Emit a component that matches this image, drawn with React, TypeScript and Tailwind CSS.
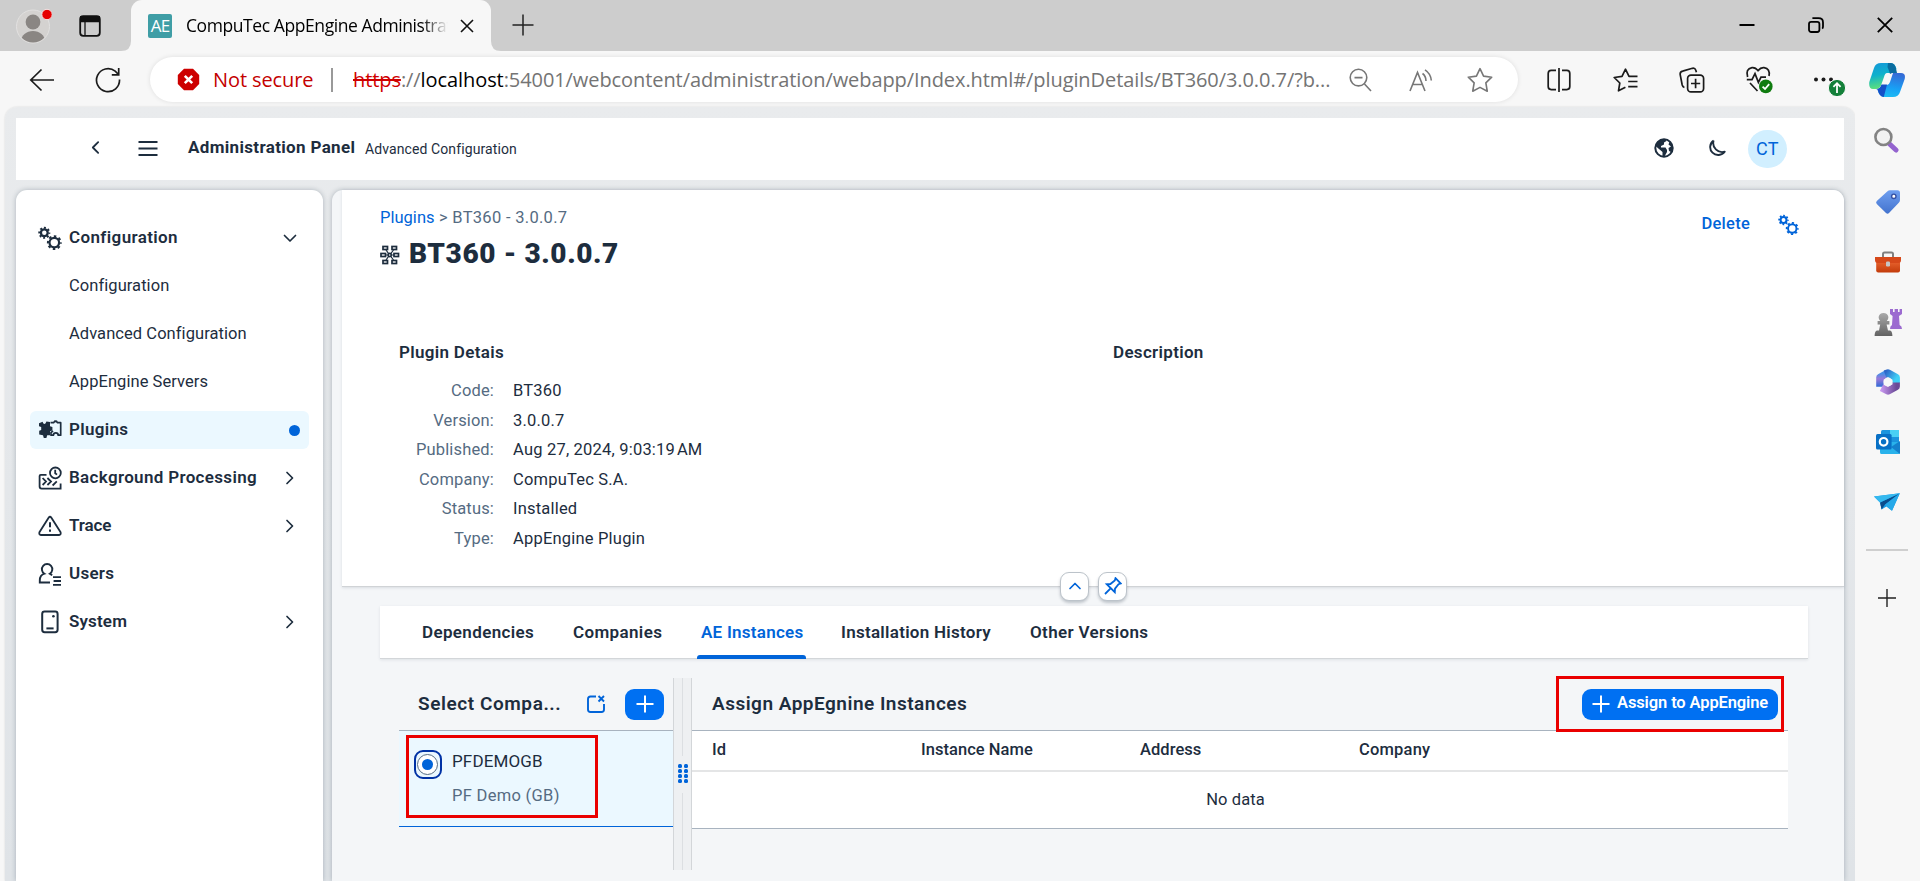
import React from "react";

const INK = "#1d2d3e";
const BLUE = "#0064d9";

type IconProps = { color?: string; className?: string };

function Gears({ color = INK, className = "" }: IconProps) {
  return (
    <svg className={className} viewBox="0 0 24 24" fill="none" stroke={color}>
      <circle cx="6.3" cy="6.8" r="3.4" strokeWidth="2.3" />
      <circle cx="6.3" cy="6.8" r="5" strokeWidth="2" strokeDasharray="1.963 1.963" strokeDashoffset="1" />
      <circle cx="16.3" cy="16.6" r="4.8" strokeWidth="2.2" />
      <circle cx="16.3" cy="16.6" r="6.4" strokeWidth="2" strokeDasharray="2.513 2.513" strokeDashoffset="1.25" />
    </svg>
  );
}

function PluginIcon() {
  return (
    <svg className="h-6 w-6" viewBox="0 0 24 24">
      <path d="M1 5.2 4.6 3.8 5.2 5.2Q6.4 6.6 7.6 5.2L8.4 3.6 12 4V8.2L14.4 9V12.6L12 13.2V17.2H9.2L8.4 20H5.8L5 17.2 1.2 16.4V12.8L3.2 12V9L1 8.2Z" fill={INK} />
      <path d="M12.500 4.700H15.600A2.100 2.100 0 0 1 19.500 4.700H22.700V17.200H20.200A2.400 2.400 0 0 0 15.400 17.200H13V14.600L15 12.800" fill="none" stroke={INK} strokeWidth="1.7" strokeLinejoin="round" />
      <path d="M16 4.500A1.800 1.800 0 0 1 19.200 4.500V2.600H16Z" fill={INK} />
    </svg>
  );
}

function ProcessIcon() {
  return (
    <svg className="h-6 w-6" viewBox="0 0 24 24" fill="none" stroke={INK} strokeWidth="1.8">
      <path d="M8.5 8.8H2.8Q1.6 8.8 1.6 10V20.6Q1.6 22.6 3.6 22.6H22.6V17.6M4.6 12 8 15.6 4.6 19M9.4 12 13 15.6 9.4 19M14.6 19.5 18.8 15.4" />
      <circle cx="17.4" cy="6.9" r="5.4" />
      <path d="M17.2 3.8V7.2L19 8.6" />
    </svg>
  );
}

function WarningIcon() {
  return (
    <svg className="h-6 w-6" viewBox="0 0 24 24" fill="none" stroke={INK} strokeWidth="1.8" strokeLinejoin="round">
      <path d="M10.6 3.7Q12 1.8 13.4 3.7L22.6 18.2Q23.2 20.8 21 21H3Q.8 20.8 1.4 18.2Z" />
      <path d="M12 8.2V13.2M12 15.6V17.8" strokeWidth="2" />
    </svg>
  );
}

function UsersIcon() {
  return (
    <svg className="h-6 w-6" viewBox="0 0 24 24" fill="none" stroke={INK} strokeWidth="1.9">
      <path d="M12 20.500H1.800V18.300Q1.800 13.300 6.400 11.700A5.200 5.200 0 1 1 11.800 11.700L14.200 13.300" />
      <path d="M15 15.2H23M15.6 19H23M15 22.8H23" strokeWidth="1.8" />
    </svg>
  );
}

function SystemIcon() {
  return (
    <svg className="h-6 w-6" viewBox="0 0 24 24" fill="none" stroke={INK} strokeWidth="2">
      <rect x="4.2" y="1.6" width="15.4" height="20.6" rx="2.4" />
      <path d="M8.4 18.4H15.6" />
      <circle cx="15.4" cy="6.2" r="1.3" fill={INK} stroke="none" />
    </svg>
  );
}

function Chevron({ d, color = INK, className = "h-4 w-4" }: { d: string } & IconProps) {
  return (
    <svg className={className} viewBox="0 0 16 16" fill="none" stroke={color} strokeWidth="1.7" strokeLinecap="round" strokeLinejoin="round">
      <path d={d} />
    </svg>
  );
}

function TitleBar() {
  return (
    <div className="flex h-[51px] items-stretch bg-[#cdcdcd]">
      <div className="flex w-[131px] items-center">
        <svg className="ml-4 h-[42px] w-9" viewBox="0 0 36 42">
          <defs>
            <clipPath id="head">
              <circle cx="17" cy="21.5" r="16" />
            </clipPath>
          </defs>
          <circle cx="17" cy="21.5" r="16.5" fill="#d4d2d0" stroke="#e2e1e0" />
          <circle cx="17" cy="17" r="7.4" fill="#8a8683" />
          <ellipse cx="17" cy="36.5" rx="12" ry="10.5" fill="#8a8683" clipPath="url(#head)" />
          <circle cx="31" cy="9.5" r="5.2" fill="#e60000" stroke="#f3e5e5" />
        </svg>
        <svg className="ml-[27px] h-[22px] w-[22px]" viewBox="0 0 22 22" fill="none" stroke="#111" strokeWidth="1.8">
          <rect x="1.2" y="1.2" width="19.6" height="19.6" rx="3" />
          <path d="M2 2H20V6.4H2Z" fill="#111" />
          <path d="M6 6V20.5" strokeWidth="1.3" />
        </svg>
      </div>
      <div className="relative flex w-[360px] items-center rounded-t-[11px] bg-[#f7f7f7]">
        <svg className="absolute bottom-0 -left-[10px] h-[10px] w-[10px]" viewBox="0 0 10 10"><path d="M10 0V10H0Q10 10 10 0" fill="#f7f7f7" /></svg>
        <svg className="absolute -right-[10px] bottom-0 h-[10px] w-[10px]" viewBox="0 0 10 10"><path d="M0 0V10H10Q0 10 0 0" fill="#f7f7f7" /></svg>
        <div className="ml-[17px] flex h-6 w-6 items-center justify-center rounded-[2px] bg-[#3f9ea6] font-['Open_Sans',sans-serif] text-[17px] font-medium tracking-[-0.9px] text-white">AE</div>
        <div className="mb-[2px] ml-[14px] w-[262px] overflow-hidden bg-gradient-to-r from-black from-90% to-transparent bg-clip-text font-['Open_Sans',sans-serif] text-[17.5px] leading-7 tracking-[-0.42px] whitespace-nowrap text-transparent">
          CompuTec AppEngine Administration
        </div>
        <svg className="ml-3 h-[14px] w-[14px]" viewBox="0 0 14 14" fill="none" stroke="#111" strokeWidth="1.6"><path d="M1 1 13 13M13 1 1 13" /></svg>
      </div>
      <div className="flex flex-1 items-center pb-[2px] pl-[21px]">
        <svg className="h-[22px] w-[22px]" viewBox="0 0 22 22" fill="none" stroke="#222" strokeWidth="1.5"><path d="M11 .5V21.5M.5 11H21.5" /></svg>
        <div className="ml-auto flex items-center gap-[53px] pr-[27px]">
          <svg className="h-4 w-4" viewBox="0 0 16 16"><path d="M.5 8H15.5" stroke="#000" strokeWidth="2" /></svg>
          <svg className="h-4 w-4" viewBox="0 0 16 16" fill="none" stroke="#000" strokeWidth="1.8"><rect x="1" y="4.8" width="10.4" height="10.2" rx="2.2" /><path d="M4.4 1.200H10.500Q15 1.200 15 5.400V9.400Q15 11 14.200 11.600" /></svg>
          <svg className="h-4 w-4" viewBox="0 0 16 16"><path d="M.8.8 15.2 15.2M15.2.8.8 15.2" stroke="#000" strokeWidth="1.8" /></svg>
        </div>
      </div>
    </div>
  );
}

function AddressBar() {
  return (
    <div className="flex h-14 items-start bg-[#f7f7f7] pt-[6px]">
      <div className="flex h-[45px] w-[150px] shrink-0 items-center">
        <svg className="ml-[29px] h-6 w-[26px]" viewBox="0 0 26 24" fill="none" stroke="#1b1b1b" strokeWidth="1.7"><path d="M25 12H2M12.5 1.5 1.8 12 12.5 22.5" /></svg>
        <svg className="ml-10 h-[26px] w-[26px]" viewBox="0 0 26 26" fill="none" stroke="#1b1b1b" strokeWidth="1.7"><path d="M24.5 12.5A11.5 11.5 0 1 1 20.2 4.2L23.5 7.5M23.7 1V7.8H16.8" /></svg>
      </div>
      <div className="flex h-[45px] w-[1368px] shrink-0 items-center rounded-full bg-white font-['Open_Sans',sans-serif] text-[20px] shadow-[0_0_5px_rgba(0,0,0,0.1)]">
        <svg className="ml-[27px] h-[23px] w-[23px] shrink-0" viewBox="0 0 23 23"><path d="M7 .8H16L22.2 7V16L16 22.2H7L.8 16V7Z" fill="#cd0000" /><path d="M7.8 7.8 15.2 15.2M15.2 7.8 7.8 15.2" stroke="#fff" strokeWidth="2.6" /></svg>
        <span className="ml-[13px] w-[104px] tracking-[-0.1px] whitespace-nowrap text-[#c40000]">Not secure</span>
        <span className="ml-[14px] h-6 w-[2px] bg-[#999]" />
        <span className="ml-5 w-[980px] text-[20px] tracking-[-0.08px] whitespace-nowrap text-[#747474]">
          <span className="text-[#d00000] line-through">https</span>://<span className="text-black">localhost</span>:54001/webcontent/administration/webapp/Index.html#/pluginDetails/BT360/3.0.0.7/?b...
        </span>
        <svg className="ml-[16px] h-6 w-6 shrink-0" viewBox="0 0 24 24" fill="none" stroke="#777" strokeWidth="1.6"><circle cx="9.500" cy="9.600" r="8.300" /><path d="M5.500 9.600H13.500M15.500 16 22 23" /></svg>
        <svg className="ml-9 h-6 w-6 shrink-0" viewBox="0 0 24 24" fill="none" stroke="#777" strokeWidth="1.6"><path d="M1 23 8.5 4.5 16 23M3.8 16.5H13.2M13.5 5.5Q17 8.2 17 13M16 1.8Q21.8 5.6 22.3 12.5" /></svg>
        <svg className="ml-[34px] h-[26px] w-[26px] shrink-0" viewBox="0 0 24 24" fill="none" stroke="#777" strokeWidth="1.5" strokeLinejoin="round"><path d="M12 1.5 15.3 8.4 22.8 9.4 17.4 14.7 18.7 22.3 12 18.8 5.3 22.3 6.6 14.7 1.2 9.4 8.7 8.4Z" /></svg>
      </div>
      <div className="flex h-[45px] flex-1 items-center pl-[29px]">
        <svg className="h-6 w-6" viewBox="0 0 24 24" fill="none" stroke="#1b1b1b" strokeWidth="1.700"><path d="M9 2.4H4.2Q1.2 2.4 1.2 5.4V18.6Q1.2 21.6 4.2 21.6H9M15 2.4H19.8Q22.8 2.4 22.8 5.4V18.6Q22.8 21.6 19.8 21.6H15M12 0V24" /></svg>
        <svg className="ml-[42px] h-6 w-[26px]" viewBox="0 0 26 24" fill="none" stroke="#1b1b1b" strokeWidth="1.700" strokeLinejoin="round"><path d="M12.4 19.2 5.5 22.8 6.8 15 1.2 9.5 9 8.3 12.5 1.2 16 8.3H24.5M15.2 13.5H24.5M15.2 18.7H24.5" /></svg>
        <svg className="ml-10 h-[26px] w-[26px]" viewBox="0 0 26 26" fill="none" stroke="#1b1b1b" strokeWidth="1.700"><path d="M5.4 20.5Q3.8 20 3.2 18L1.2 7.6Q.8 4.8 3.6 4.1L13.4 1.3Q16 .8 16.8 3.2L17.4 5.2" /><rect x="8.6" y="8.2" width="16" height="16.6" rx="3.4" /><path d="M16.6 11.8V21.2M12 16.5H21.2" /></svg>
        <svg className="ml-10 h-8 w-[30px]" viewBox="0 0 30 32" fill="none" stroke="#1b1b1b" strokeWidth="1.700"><path d="M2.6 13Q.2 4.8 7 3.6 10.4 3.2 13 6.6 15.8 3.2 19 3.6 25.4 4.8 24 12M1.8 15.6H7L10 9.6 13.4 18.4 16 13.2H21M5 19 12.5 27" /><circle cx="20.8" cy="22.4" r="6.8" fill="#107c10" stroke="none" /><path d="M17.6 22.6 20 25 24.2 20.2" stroke="#fff" strokeWidth="1.8" /></svg>
        <svg className="ml-[39px] h-8 w-8" viewBox="0 0 32 32"><g fill="#1b1b1b"><circle cx="2" cy="15.5" r="2" /><circle cx="9.5" cy="15.5" r="2" /><circle cx="17" cy="15.5" r="2" /></g><circle cx="23" cy="24" r="8.6" fill="#14803a" stroke="#f7f7f7" /><path d="M23 29V19.5M19.4 22.8 23 19.2 26.6 22.8" fill="none" stroke="#fff" strokeWidth="1.8" /></svg>
        <svg className="ml-[23px] h-9 w-9 shrink-0" viewBox="0 0 36 36">
          <defs>
            <linearGradient id="cp1" x1="0" y1="0" x2=".2" y2="1"><stop offset="0" stopColor="#1597d9" /><stop offset=".5" stopColor="#0fb1cc" /><stop offset="1" stopColor="#5be07c" /></linearGradient>
            <linearGradient id="cp2" x1=".5" y1="0" x2=".3" y2="1"><stop offset="0" stopColor="#356bd6" /><stop offset=".6" stopColor="#18a0f5" /><stop offset="1" stopColor="#1dbdf3" /></linearGradient>
          </defs>
          <path d="M5 6Q6.500 1 12 1H22Q26 1 27.500 7L24 11H18Q16 11 15 15L12.500 22Q11 27 7 27H4Q-.5 27 .3 20Z" fill="url(#cp1)" />
          <path d="M31 30Q29.500 35 24 35H15Q10.500 35 8.500 27.500 12 27 13 23H18Q20 23 21 20L24 11H32Q37 11 35.700 17Z" fill="url(#cp2)" />
          <path d="M19 1H22Q26 1 27.200 7.500L28 11H23L21 12Q20 8.500 18.500 5Z" fill="#0a6c9f" />
          <path d="M7 27Q11 27 12.500 22.500H18L14.800 35Q10.500 35 8.500 27.500Z" fill="#1450c8" />
        </svg>
      </div>
    </div>
  );
}

function EdgeRail() {
  return (
    <div className="flex w-[65px] shrink-0 flex-col items-center bg-[#f7f7f7] pr-[2px]">
      <svg className="mt-5 mr-px h-[26px] w-[26px]" viewBox="0 0 26 26"><path d="M15.5 16 23 23" stroke="#9464cf" strokeWidth="5" strokeLinecap="round" /><circle cx="10.4" cy="10" r="8" fill="#f2f2f2" stroke="#838383" strokeWidth="2.6" /></svg>
      <svg className="mt-9 ml-[2px] h-[26px] w-[26px]" viewBox="0 0 26 26"><defs><linearGradient id="tag" x2="0" y2="1"><stop stopColor="#6f9ff0" /><stop offset="1" stopColor="#4373ce" /></linearGradient></defs><path d="M15 1.2H22.5Q25 1.2 25 3.8V11Q25 12.6 23.8 13.8L14 24Q12.6 25.5 11 24L1.8 15Q.4 13.6 1.8 12L12.5 2.2Q13.5 1.2 15 1.2Z" fill="url(#tag)" /><circle cx="18.8" cy="7.3" r="2.2" fill="#fff" stroke="#3550a3" strokeWidth="1.4" /></svg>
      <svg className="mt-9 ml-[2px] h-[22px] w-7" viewBox="0 0 28 22"><defs><linearGradient id="box" x2="0" y2="1"><stop stopColor="#f06a35" /><stop offset="1" stopColor="#c33c0b" /></linearGradient></defs><path d="M9 6V3Q9 1.5 10.5 1.5H17.5Q19 1.5 19 3V6" fill="none" stroke="#808080" strokeWidth="2" /><rect x="2.2" y="8" width="23.8" height="13.4" rx="2" fill="url(#box)" /><path d="M1 6H27V9Q27 12 24.5 12H3.5Q1 12 1 9Z" fill="#d6491a" /><rect x="12" y="10.4" width="4" height="5" rx="1.2" fill="#c6c6c6" /></svg>
      <svg className="mt-[36px] ml-[2px] h-7 w-7" viewBox="0 0 28 28"><defs><linearGradient id="pawn" x2="0" y2="1"><stop stopColor="#aaa" /><stop offset="1" stopColor="#626262" /></linearGradient></defs><path d="M16 0H19V3H20.6V0H24V3H25.6V0H28V5L25 7 25.6 16Q28 17 28 20H16Q16 17 18 16L18.6 7 16 5Z" fill="#9c6bd0" /><path d="M4.6 8A5 5 0 0 1 14.4 8Q14.4 10.5 12.8 12H15.4V15.6H12.6L14 21.4H16Q18.4 22 18.4 27H.6Q.6 22 3 21.4H5L6.2 15.6H3.6V12H6.2Q4.6 10.5 4.6 8" fill="url(#pawn)" /></svg>
      <svg className="mt-8 ml-[2px] h-[26px] w-6" viewBox="0 0 24 26" fill="none" strokeWidth="7.400" strokeLinejoin="round">
        <defs>
          <linearGradient id="ml" x2="0" y2="1"><stop stopColor="#4a8fe6" /><stop offset=".4" stopColor="#9a78d8" /><stop offset="1" stopColor="#2f6bd6" /></linearGradient>
          <linearGradient id="mr" x2="1" y2=".6"><stop stopColor="#2f66c9" /><stop offset="1" stopColor="#3fd0f6" /></linearGradient>
          <linearGradient id="mb" x2="1" y2="0"><stop stopColor="#c695ee" /><stop offset="1" stopColor="#6a4a96" /></linearGradient>
        </defs>
        <path d="M11 4.500 3.900 8.500V17.800" stroke="url(#ml)" />
        <path d="M20.200 13V17.600L12 22 5.500 18.800" stroke="url(#mb)" />
        <path d="M9 5 12 3.900 20.200 8.500V13.500" stroke="url(#mr)" />
        <circle cx="12" cy="13" r="4.400" fill="#f7f7f7" />
      </svg>
      <svg className="mt-[35px] ml-[2px] h-6 w-6" viewBox="0 0 24 24"><rect x="5" width="18" height="22" rx="1.5" fill="#1b94de" /><path d="M14 0H23V7H14Z" fill="#49d0f4" /><path d="M4 12H24V22.5Q24 24 22.5 24H5Q4 24 4 22Z" fill="#29b2eb" /><path d="M15 17 24 11V24Z" fill="#1480cc" /><rect y="4" width="15.6" height="15.6" rx="1.5" fill="#0870c5" /><circle cx="7.6" cy="11.8" r="3.8" fill="none" stroke="#fff" strokeWidth="2.2" /></svg>
      <svg className="mt-[39px] ml-px h-[18px] w-[26px]" viewBox="0 0 26 18"><path d="M0 3.4 25.8.2 18 17.8 12.4 13.6 7.6 16.4 6 9.6Z" fill="#169be8" /><path d="M25.8.2 6 9.6 7.6 16.4 11 11.5Z" fill="#0b4c8c" /><path d="M0 3.4 25.8.2 6 9.6Z" fill="#35b9ef" /><path d="M25.8.2 11 11.8 18 17.8Z" fill="#26a9e9" /></svg>
      <div className="mt-[38px] h-[2px] w-[42px] bg-[#cfcfcf]" />
      <svg className="mt-[38px] h-[18px] w-[18px]" viewBox="0 0 18 18" stroke="#222" strokeWidth="1.4"><path d="M9 0V18M0 9H18" /></svg>
    </div>
  );
}

function ShellHeader() {
  return (
    <header className="flex h-[62px] items-center bg-white">
      <Chevron d="M10.5 3 5.5 8 10.5 13" className="mb-[3px] ml-[71px] h-[17px] w-[17px]" />
      <svg className="mb-[3px] ml-[34px] h-[18px] w-5" viewBox="0 0 20 18" stroke={INK} strokeWidth="2"><path d="M.5 3H19.5M.5 9.500H19.5M.5 16H19.5" /></svg>
      <span className="mb-[2px] ml-[30px] w-[168px] text-[17px] font-bold tracking-[0.34px] whitespace-nowrap">Administration Panel</span>
      <span className="ml-[9px] pt-px text-[14px] tracking-[0.1px] whitespace-nowrap">Advanced Configuration</span>
      <svg className="mb-[3px] ml-auto h-5 w-5" viewBox="0 0 20 20"><circle cx="10" cy="10" r="8.700" fill="#fff" stroke={INK} strokeWidth="2" /><path d="M2.5 5 7.5 1H11L12.5 3 10 4.5V6.5L7 8V9.500H11.5L13 12V14L10.5 18.500 8.5 18V14L5 11 1.5 8ZM15.5 3.800 18.5 7.5 18 14.5 15 13 14.5 10 17 8.5 14.500 6.500Z" fill={INK} /></svg>
      <svg className="mb-[3px] ml-[34px] h-[18px] w-[18px]" viewBox="0 0 18 18" fill="none" stroke={INK} strokeWidth="1.900" strokeLinejoin="round"><path d="M5.600 1.500A8 8 0 1 0 16.700 12.700 9 9 0 0 1 5.600 1.500" /></svg>
      <div className="mr-[57px] ml-[22px] flex h-[38px] w-[39px] items-center justify-center rounded-full bg-[#d1efff] pb-px text-[18px] tracking-[0.3px] text-[#0064d9]">CT</div>
    </header>
  );
}

const EXPAND = "M5 2.500 10.500 8 5 13.500";
const OPEN = "M2.500 5.500 8 11 13.500 5.500";

function NavGroup({ icon, label, tracking, chevron, active }: { icon: React.ReactNode; label: string; tracking: string; chevron?: string; active?: boolean }) {
  return (
    <div className={`flex h-[38px] items-center rounded-md pl-2 ${active ? "bg-[#ebf8ff]" : ""}`}>
      {icon}
      <span className={`ml-[7px] text-[17px] font-semibold whitespace-nowrap ${tracking}`}>{label}</span>
      {chevron && <Chevron d={chevron} className="mr-[11px] mb-px ml-auto h-4 w-4" />}
      {active && <span className="mr-[9px] ml-auto h-[11px] w-[11px] rounded-full bg-[#0064d9]" />}
    </div>
  );
}

function NavLeaf({ label }: { label: string }) {
  return <div className="flex h-[38px] items-center pl-[39px] text-[16.500px] tracking-[0.06px]">{label}</div>;
}

function SideNav() {
  return (
    <nav className="flex w-[307px] shrink-0 flex-col gap-[10px] rounded-t-[11px] bg-white pt-[29px] pr-[14px] pl-[14px] shadow-[0_0_5px_rgba(34,53,72,0.3)]">
      <NavGroup icon={<Gears className="h-6 w-6" />} label="Configuration" tracking="tracking-[0.38px]" chevron={OPEN} />
      <NavLeaf label="Configuration" />
      <NavLeaf label="Advanced Configuration" />
      <NavLeaf label="AppEngine Servers" />
      <NavGroup icon={<PluginIcon />} label="Plugins" tracking="tracking-[0.3px]" active />
      <NavGroup icon={<ProcessIcon />} label="Background Processing" tracking="tracking-[0.33px]" chevron={EXPAND} />
      <NavGroup icon={<WarningIcon />} label="Trace" tracking="tracking-[-0.1px]" chevron={EXPAND} />
      <NavGroup icon={<UsersIcon />} label="Users" tracking="tracking-[0.25px]" />
      <NavGroup icon={<SystemIcon />} label="System" tracking="tracking-[0.15px]" chevron={EXPAND} />
    </nav>
  );
}

const details = [
  ["Code:", "BT360"],
  ["Version:", "3.0.0.7"],
  ["Published:", "Aug 27, 2024, 9:03:19\u200AAM"],
  ["Company:", "CompuTec S.A."],
  ["Status:", "Installed"],
  ["Type:", "AppEngine Plugin"],
];

function ObjectHeader() {
  return (
    <section className="relative ml-[10px] flex h-[397px] flex-col rounded-tr-[11px] border-b border-[#d0d3d6] bg-white pl-[38px] shadow-[0_1px_3px_rgba(34,53,72,0.12)]">
      <div className="flex">
        <div className="pt-[18px]">
          <div className="h-5 text-[16.500px] leading-5 tracking-[0.3px] text-[#556b82]"><a className="tracking-[0.02px] text-[#0064d9]">Plugins</a> &gt; BT360 - 3.0.0.7</div>
          <div className="mt-2 flex h-9 items-center">
            <svg className="mt-[2px] h-5 w-5" viewBox="0 0 20 20" fill="none" stroke={INK} strokeWidth="1.700">
              <rect x="3" y="1.500" width="4.500" height="3" /><rect x="12" y="1.500" width="4.500" height="3" />
              <rect x="1" y="8.500" width="4.500" height="3" /><rect x="14" y="8.500" width="4.500" height="3" />
              <rect x="3" y="15.500" width="4.500" height="3" /><rect x="12" y="15.500" width="4.500" height="3" />
              <circle cx="9.700" cy="10" r="1.600" /><path d="M6 5 8.600 8.600M13.500 5 10.800 8.600M6 15 8.600 11.400M13.500 15 10.800 11.400M5.500 10H8M11.500 10H14" strokeWidth="1.200" />
            </svg>
            <h1 className="ml-[9px] text-[28px] font-black tracking-[0.6px] whitespace-nowrap">BT360 - 3.0.0.7</h1>
          </div>
        </div>
        <div className="mr-[45px] ml-auto flex h-10 items-center pt-[29px]">
          <span className="text-[16.500px] font-medium tracking-[0.25px] text-[#0064d9]">Delete</span>
          <Gears color={BLUE} className="ml-7 h-[21px] w-[21px]" />
        </div>
      </div>
      <div className="mt-[70px] flex pl-[19px] text-[16.5px]">
        <div className="w-[714px]">
          <h2 className="h-5 text-[17px] leading-5 font-semibold tracking-[0.32px]">Plugin Detais</h2>
          <dl className="mt-[14px] grid grid-cols-[95px_1fr] gap-x-[19px]">
            {details.map(([k, v]) => (
              <React.Fragment key={k}>
                <dt className="h-[29.6px] text-right leading-[29.6px] tracking-[0.16px] text-[#556b82]">{k}</dt>
                <dd className="h-[29.6px] leading-[29.6px] tracking-[0.2px]">{v}</dd>
              </React.Fragment>
            ))}
          </dl>
        </div>
        <h2 className="h-5 text-[17px] leading-5 font-semibold tracking-[0.32px]">Description</h2>
      </div>
      <div className="absolute -bottom-[15px] left-[718px] flex gap-[9px]">
        <span className="flex h-[29px] w-[29px] items-center justify-center rounded-[9px] border border-[#bcc3ca] bg-white shadow-[0_2px_3px_rgba(34,53,72,0.25)]">
          <Chevron d="M3 10.500 8 5.500 13 10.500" color={BLUE} className="mb-px h-4 w-4" />
        </span>
        <span className="flex h-[29px] w-[29px] items-center justify-center rounded-[9px] border border-[#bcc3ca] bg-white shadow-[0_2px_3px_rgba(34,53,72,0.25)]">
          <svg className="mb-px h-[18px] w-[18px]" viewBox="0 0 18 18" fill="none" stroke={BLUE} strokeWidth="1.800"><path d="M11.500 1.200 16.800 6.500 14.500 7.200 11 11.600 10.800 15.200 2.800 7.200 6.400 7 10.800 3.500ZM6.600 11.400 1 17" /></svg>
        </span>
      </div>
    </section>
  );
}

function TabBar() {
  const tab = "flex items-center h-full whitespace-nowrap pt-[2px]";
  return (
    <div className="mt-[19px] mr-9 ml-12 flex h-[53px] items-stretch border-b border-[#d3d6d9] bg-white pl-[42px] text-[17px] font-semibold tracking-[0.36px] shadow-[0_1px_3px_rgba(34,53,72,0.1)]">
      <div className="w-[151px]"><div className={tab}>Dependencies</div></div>
      <div className="w-[124px]"><div className={tab}>Companies</div></div>
      <div className="-mb-px w-[109px] rounded-t-[3px]"><div className="flex h-[49px] items-center pt-[5px] pl-[4px] tracking-[0.26px] whitespace-nowrap text-[#0064d9]">AE Instances</div><div className="h-1 rounded-t-[3px] bg-[#0064d9]" /></div>
      <div className="ml-[35px] w-[189px] tracking-[0.28px]"><div className={tab}>Installation History</div></div>
      <div className={tab}>Other Versions</div>
    </div>
  );
}

function CompanyPanel() {
  return (
    <div className="w-[274px] shrink-0">
      <div className="flex h-[53px] items-center border-b border-[#a8b3bf] pl-[19px]">
        <span className="w-[169px] text-[19px] font-semibold tracking-[0.57px] whitespace-nowrap">Select Compa...</span>
        <svg className="mb-px h-[18px] w-[18px]" viewBox="0 0 18 18" fill="none" stroke={BLUE} strokeWidth="1.900"><path d="M9 1.500H3.500Q1 1.500 1 4V14.500Q1 17 3.500 17H14.500Q17 17 17 14.500V9M11.500 1 17 6.500M17 1 11.500 6.500" /></svg>
        <span className="ml-5 flex h-[31px] w-[39px] items-center justify-center rounded-[9px] bg-[#0070f2]">
          <svg className="mb-px h-[18px] w-[18px]" viewBox="0 0 18 18" stroke="#fff" strokeWidth="2"><path d="M9 .5V17.500M.5 9H17.500" /></svg>
        </span>
      </div>
      <div className="relative flex h-24 border-b border-[#0064d9] bg-[#ebf8ff]">
        <span className="mt-[19px] ml-[15px] flex h-[29px] w-7 items-center justify-center rounded-[9px] border-2 border-[#0032a5] pr-px">
          <span className="flex h-[21px] w-[21px] items-center justify-center rounded-full border border-[#556b82] bg-white">
            <span className="h-[11px] w-[11px] rounded-full bg-[#0064d9]" />
          </span>
        </span>
        <div className="pt-[18px] pl-[10px] text-[16.500px]">
          <div className="text-[17px] leading-[24px] tracking-[0.14px]">PFDEMOGB</div>
          <div className="mt-[11px] leading-[24px] tracking-[0.3px] text-[#556b82]">PF Demo (GB)</div>
        </div>
        <div className="absolute top-1 left-[7px] h-[83px] w-[192px] border-[3px] border-[#ea0000]" />
      </div>
    </div>
  );
}

function Splitter() {
  return (
    <div className="flex h-48 w-[19px] shrink-0 flex-col items-center border-x border-[#d3d6d9] bg-[#eef0f2]">
      <div className="w-px flex-1 bg-[#dcdfe2]" />
      <div className="mt-2 mb-[10px] grid grid-cols-2 gap-x-[2px] gap-y-px">
        {Array.from({ length: 8 }, (_, i) => (
          <span key={i} className="h-1 w-1 rounded-[1.5px] bg-[#0064d9]" />
        ))}
      </div>
      <div className="w-px flex-1 bg-[#dcdfe2]" />
    </div>
  );
}

function InstancesPanel() {
  return (
    <div className="w-[1096px] shrink-0">
      <div className="relative flex h-[53px] items-center border-b border-[#a8b3bf] pl-5">
        <span className="text-[19px] font-semibold tracking-[0.49px] whitespace-nowrap">Assign AppEgnine Instances</span>
        <span className="mr-[10px] ml-auto flex h-[31px] w-[196px] items-center rounded-[9px] bg-[#0070f2] pl-[10px] text-[16.500px] font-semibold whitespace-nowrap text-white">
          <svg className="mr-[7px] mb-px h-[18px] w-[18px] shrink-0" viewBox="0 0 18 18" stroke="#fff" strokeWidth="2"><path d="M9 .5V17.500M.5 9H17.500" /></svg>
          <span className="mb-px tracking-[-0.12px]">Assign to AppEngine</span>
        </span>
        <div className="absolute -top-[2px] left-[864px] h-14 w-[228px] border-[3px] border-[#ea0000]" />
      </div>
      <div className="grid h-[41px] grid-cols-[209px_219px_219px_1fr] items-center border-b-2 border-[#e4e5e6] bg-white pl-5 text-[16.500px] font-medium tracking-[0.04px]">
        <span>Id</span>
        <span>Instance Name</span>
        <span>Address</span>
        <span className="tracking-[0.2px]">Company</span>
      </div>
      <div className="flex h-[57px] items-center justify-center border-b border-[#a8b3bf] bg-white pr-[9px] text-[16.500px] tracking-[0.1px]">No data</div>
    </div>
  );
}

export default function App() {
  return (
    <div className="flex h-[881px] w-[1920px] flex-col overflow-hidden bg-[#f7f7f7] font-[Roboto,sans-serif] text-[#1d2d3e]">
      <TitleBar />
      <AddressBar />
      <div className="flex min-h-0 flex-1 pl-[5px]">
        <div className="flex w-[1850px] shrink-0 flex-col rounded-t-[12px] bg-gradient-to-b from-[#e9ebed] to-[#dfe3e7] pt-[11px] pr-[11px] pl-[11px] shadow-[0_0_2px_rgba(0,0,0,0.15)]">
          <ShellHeader />
          <div className="mt-[10px] flex min-h-0 flex-1 gap-[9px]">
            <SideNav />
            <main className="w-[1512px] rounded-t-[11px] bg-[#f4f6f8] shadow-[0_0_5px_rgba(34,53,72,0.3)]">
              <ObjectHeader />
              <TabBar />
              <div className="mt-[19px] ml-[67px] flex">
                <CompanyPanel />
                <Splitter />
                <InstancesPanel />
              </div>
            </main>
          </div>
        </div>
        <EdgeRail />
      </div>
    </div>
  );
}
